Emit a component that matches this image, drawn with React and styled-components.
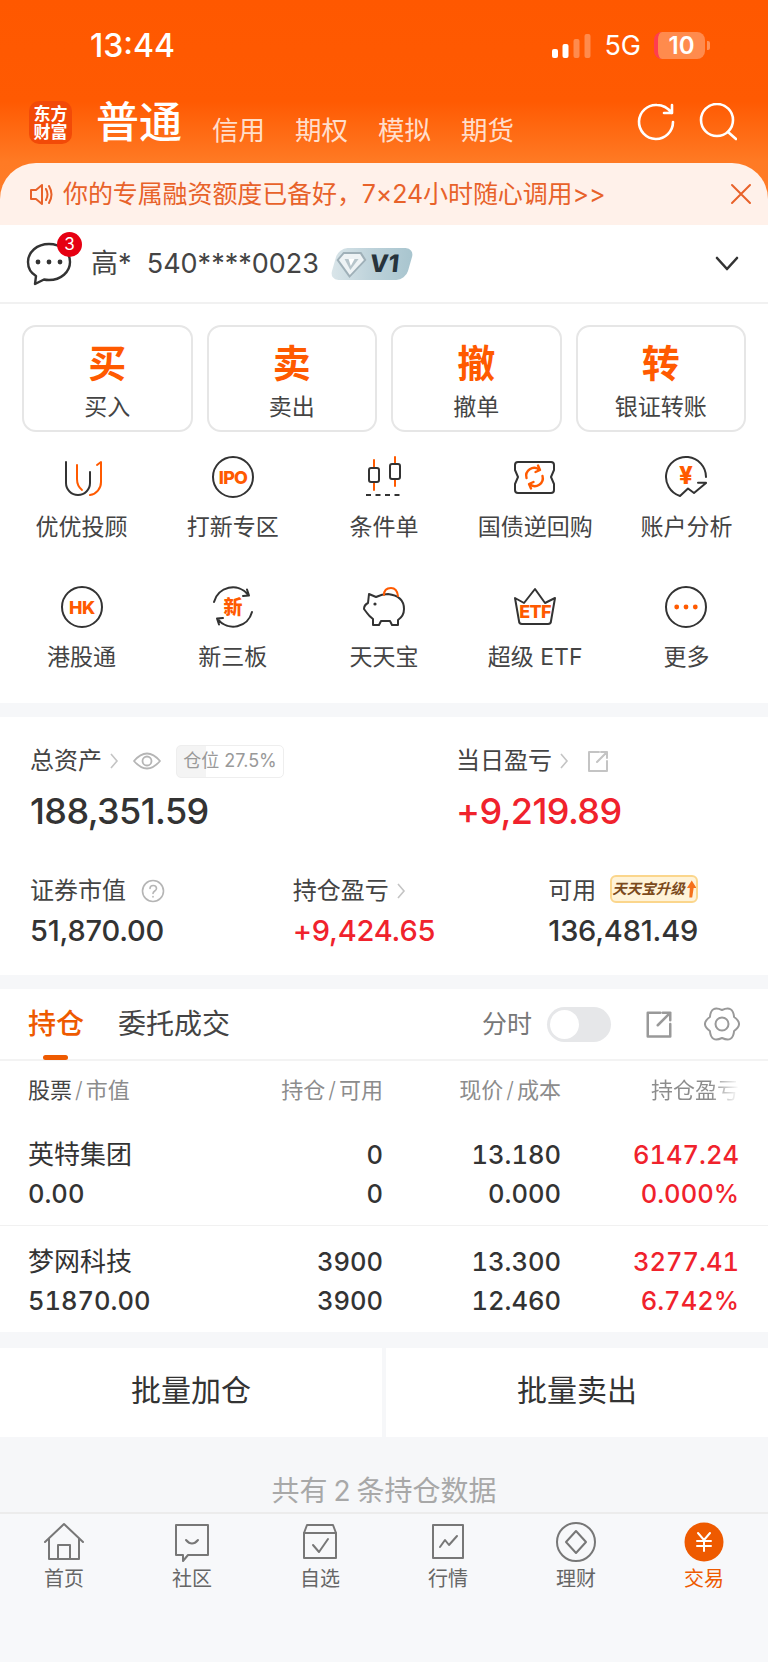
import React from 'react';
import styled, {createGlobalStyle} from 'styled-components';

const ORANGE = '#ff5a00';
const DARK = '#333';
const RED = '#f0222c';
const TEXT_FONT = 'Inter, "Noto Sans CJK SC", sans-serif';

const GlobalStyle = createGlobalStyle`
  html, body {
    margin: 0;
    padding: 0;
    background: #f6f7f9;
    font-family: ${TEXT_FONT};
  }
  * { box-sizing: border-box; }
`;

const Page = styled.div`
  width: 768px;
  height: 1662px;
  overflow: hidden;
  display: flex;
  flex-direction: column;
  background: #f6f7f9;
`;

/* header */
const Header = styled.header`
  height: 225px;
  display: flex;
  flex-direction: column;
  background: linear-gradient(180deg, #ff5800 0%, #ff5a02 45%, #ff7a24 72%, #ff7f2c 100%);
`;

const StatusBar = styled.div`
  height: 90px;
  padding: 1px 58px 0 90px;
  display: flex;
  align-items: center;
  color: #fff;
`;

const Clock = styled.div`
  font-size: 32px;
  font-weight: 500;
  line-height: 40px;
  margin-right: auto;
`;

const Network = styled.span`
  font-size: 27px;
  line-height: 32px;
  margin: 0 13px 0 13px;
`;

const Battery = styled.div`
  position: relative;
  width: 51px;
  height: 27px;
  border-radius: 8px;
  overflow: hidden;
  background: rgba(255, 255, 255, 0.3);
  border-left: 4px solid #ff3d4f;
  font-size: 24px;
  font-weight: 600;
  line-height: 27px;
  text-align: center;
`;

const BatteryCap = styled.i`
  width: 3px;
  height: 9px;
  margin-left: 2px;
  border-radius: 0 2px 2px 0;
  background: rgba(255, 255, 255, 0.35);
`;

const NavRow = styled.nav`
  height: 44px;
  margin: 10px 0 19px;
  padding: 0 31px 0 29px;
  display: flex;
  align-items: center;
  color: #fff;
`;

const Logo = styled.div`
  width: 43px;
  height: 43px;
  border-radius: 10px;
  background: #f24a08;
  font-size: 17px;
  font-weight: 700;
  line-height: 18px;
  text-align: center;
  padding-top: 4px;
`;

const NavTitle = styled.div`
  margin-left: 24px;
  width: 88px;
  font-size: 43px;
  font-weight: 500;
  line-height: 44px;
  white-space: nowrap;
`;

const NavTabs = styled.div`
  margin-left: 28px;
  padding-top: 15px;
  display: flex;
  gap: 30.5px;
  flex: 1;
`;

const NavTab = styled.span`
  width: 52.5px;
  font-size: 26.5px;
  line-height: 30px;
  white-space: nowrap;
  color: rgba(255, 255, 255, 0.8);
`;

const NavActions = styled.div`
  display: flex;
  gap: 24px;
`;

const Notice = styled.div`
  height: 62px;
  border-radius: 36px 36px 0 0;
  background: #fff1ea;
  padding: 0 16px 0 29px;
  display: flex;
  align-items: center;
  color: #e8622a;
`;

const NoticeText = styled.span`
  flex: 1;
  margin-left: 9px;
  font-size: 25px;
  letter-spacing: -0.1px;
  line-height: 36px;
  white-space: nowrap;
`;

/* account */
const AccountRow = styled.div`
  height: 79px;
  padding: 0 28px 0 26px;
  display: flex;
  align-items: center;
  background: #fff;
  border-bottom: 2px solid #f1f1f1;
`;

const ChatWrap = styled.div`
  position: relative;
  width: 46px;
  height: 46px;
  margin-right: 19px;
`;

const Badge = styled.b`
  position: absolute;
  top: -9px;
  left: 31px;
  width: 25px;
  height: 25px;
  border-radius: 50%;
  background: #e60012;
  color: #fff;
  font-size: 17px;
  font-weight: 400;
  line-height: 25px;
  text-align: center;
`;

const AccountText = styled.span`
  font-size: 27px;
  line-height: 36px;
  color: #444;
  white-space: pre;
`;

const Level = styled.div`
  width: 76px;
  height: 32px;
  margin: 0 auto 0 15px;
  padding-left: 1px;
  border-radius: 9px;
  transform: skewX(-16deg);
  background: linear-gradient(75deg, #dbe6ea 0%, #bdd2da 50%, #a7c4ce 100%);
  display: flex;
  align-items: center;
`;

const LevelInner = styled.div`
  transform: skewX(10deg);
  display: flex;
  align-items: center;
  gap: 3px;
  color: #26333c;
  font-size: 24px;
  font-weight: 800;
  line-height: 32px;
`;

/* actions */
const ActionPanel = styled.section`
  background: #fff;
  padding: 21px 0 31px;
`;

const TradeButtons = styled.div`
  padding: 0 22px;
  display: grid;
  grid-template-columns: repeat(4, 1fr);
  gap: 14px;
`;

const TradeButton = styled.div`
  height: 107px;
  border: 2px solid #e6e6e6;
  border-radius: 14px;
  display: flex;
  flex-direction: column;
  align-items: center;
`;

const TradeGlyph = styled.div`
  margin-top: 14px;
  font-size: 38px;
  font-weight: 700;
  line-height: 44px;
  color: ${ORANGE};
`;

const TradeLabel = styled.div`
  margin-top: 7px;
  font-size: 23px;
  line-height: 30px;
  color: #444;
  white-space: nowrap;
`;

const Shortcuts = styled.div`
  margin-top: 23px;
  padding: 0 6px;
  display: grid;
  grid-template-columns: repeat(5, 1fr);
  row-gap: 43px;
`;

const Shortcut = styled.div`
  height: 87px;
  display: flex;
  flex-direction: column;
  align-items: center;
`;

const ShortcutLabel = styled.div`
  margin-top: 13px;
  font-size: 23px;
  line-height: 30px;
  color: #444;
  white-space: nowrap;
`;

/* assets */
const AssetsCard = styled.section`
  margin-top: 14px;
  height: 258px;
  background: #fff;
  padding: 27px 0 0 30px;
`;

const AssetRow = styled.div`
  display: flex;
  margin-top: ${p => p.$top || 0}px;
`;

const AssetCol = styled.div`
  width: ${p => p.$width}px;
`;

const AssetLabel = styled.div`
  height: 34px;
  display: flex;
  align-items: center;
  font-size: 24px;
  line-height: 34px;
  color: #444;
`;

const Chevron = styled.svg`
  width: 10px;
  height: 20px;
  margin-left: 7px;
  fill: none;
  stroke: #c4c4c4;
  stroke-width: 1.6;
`;

const Value = styled.div`
  margin-top: ${p => (p.$big ? 11 : 5)}px;
  font-size: ${p => (p.$big ? 36 : 29)}px;
  letter-spacing: ${p => (p.$big ? -0.6 : -0.2)}px;
  line-height: ${p => (p.$big ? 44 : 36)}px;
  font-weight: 500;
  color: ${p => (p.$up ? RED : DARK)};
`;

const PositionPill = styled.div`
  width: 108px;
  height: 33px;
  margin-left: 15px;
  border: 1.5px solid #eee;
  border-radius: 5px;
  background: linear-gradient(90deg, #f4f4f4 27.5%, #fff 27.5%);
  font-size: 18px;
  line-height: 30px;
  color: #999;
  text-align: center;
  white-space: nowrap;
`;

const UpgradeTag = styled.div`
  width: 88px;
  height: 28px;
  margin: -4px 0 0 14px;
  border: 2px solid #fbd68c;
  border-radius: 6px;
  background: #fff3d8;
  display: flex;
  align-items: center;
  justify-content: center;
  gap: 1px;
  font-size: 14.5px;
  font-style: italic;
  font-weight: 700;
  line-height: 24px;
  color: #7b4a1c;
  white-space: nowrap;
`;

/* holdings */
const Holdings = styled.section`
  margin-top: 14px;
  background: #fff;
`;

const HoldingTabs = styled.div`
  position: relative;
  height: 72px;
  padding: 0 28px;
  display: flex;
  align-items: center;
  border-bottom: 2px solid #f3f3f3;
`;

const HoldingTab = styled.div`
  margin-right: ${p => (p.$active ? 34 : 0)}px;
  font-size: 28px;
  line-height: 40px;
  font-weight: ${p => (p.$active ? 500 : 400)};
  color: ${p => (p.$active ? '#ee5a00' : '#444')};
`;

const TabMark = styled.i`
  position: absolute;
  left: 43px;
  bottom: -1px;
  width: 25px;
  height: 5px;
  border-radius: 3px;
  background: #ee5a00;
`;

const HoldingTools = styled.div`
  margin-left: auto;
  display: flex;
  align-items: center;
  color: #777;
  font-size: 25px;
  line-height: 36px;
`;

const Toggle = styled.div`
  width: 64px;
  height: 35px;
  margin: 0 33px 0 15px;
  padding: 3px;
  border-radius: 18px;
  background: #e6e7e9;
`;

const ToggleKnob = styled.div`
  width: 29px;
  height: 29px;
  border-radius: 50%;
  background: #fff;
`;

const TableRow = styled.div`
  padding: ${p => (p.$head ? '0' : '16px 0 12px')};
  margin: 0 29px 0 0;
  padding-left: 28px;
  height: ${p => (p.$head ? '58px' : 'auto')};
  display: grid;
  grid-template-columns: 177px 178px 178px 178px;
  align-items: center;
`;

const RowLine = styled.div`
  border-top: 1px solid #f1f1f1;
`;

const HeadCell = styled.div`
  font-size: 22px;
  line-height: 30px;
  color: #8c8c8c;
  text-align: ${p => (p.$left ? 'left' : 'right')};
  white-space: nowrap;
`;

const HeadStrong = styled.span`
  color: #444;
`;

const Slash = styled.span`
  margin: 0 3px;
  font-weight: 300;
`;

const HeadFade = styled.span`
  background: linear-gradient(90deg, #8c8c8c 68%, #fff 100%);
  -webkit-background-clip: text;
  background-clip: text;
  color: transparent;
`;

const Cell = styled.div`
  font-size: ${p => (p.$name ? 26 : 25.5)}px;
  font-variant-numeric: tabular-nums;
  line-height: 39px;
  font-weight: ${p => (p.$name ? 400 : 500)};
  color: ${p => (p.$up ? RED : DARK)};
  text-align: ${p => (p.$left ? 'left' : 'right')};
  white-space: nowrap;
`;

/* batch buttons */
const BatchBar = styled.div`
  margin-top: 16px;
  height: 89px;
  display: flex;
  gap: 4px;
`;

const BatchButton = styled.div`
  flex: 1;
  background: #fff;
  font-size: 30px;
  line-height: 84px;
  color: #333;
  text-align: center;
`;

const Summary = styled.div`
  height: 75px;
  padding-top: 34px;
  font-size: 28px;
  word-spacing: -2px;
  line-height: 40px;
  color: #a8a8a8;
  text-align: center;
  white-space: pre;
`;

/* tab bar */
const TabBar = styled.footer`
  height: 150px;
  padding-top: 6px;
  background: #f7f8fa;
  border-top: 2px solid #ececec;
  display: grid;
  grid-template-columns: repeat(6, 1fr);
`;

const TabItem = styled.div`
  display: flex;
  flex-direction: column;
  align-items: center;
  gap: 1px;
  font-size: 20px;
  line-height: 28px;
  color: ${p => (p.$active ? '#ee5a00' : '#666')};
`;

/* icons */
const Icon = styled.svg`
  width: ${p => p.$size || 44}px;
  height: ${p => p.$size || 44}px;
  flex: none;
  fill: none;
  margin-left: ${p => p.$left || 0}px;
  stroke: ${p => p.$stroke || DARK};
  stroke-width: ${p => p.$weight || 2};
  stroke-linecap: round;
  stroke-linejoin: round;
`;

const Tiny = styled.text`
  fill: ${ORANGE};
  stroke: none;
  font-family: ${TEXT_FONT};
  font-weight: 800;
  font-size: ${p => p.$size}px;
  letter-spacing: ${p => p.$tight || 0}px;
  text-anchor: middle;
`;

const Orange = styled.g`
  stroke: ${ORANGE};
  fill: none;
`;

const shortcuts = [
  {
    label: '优优投顾',
    icon: (
      <>
        <path d="M6 7V28a12 12 0 0 0 24 0V17" />
        <Orange>
          <path d="M17 10V24q0 7 5 11" />
          <path d="M37 10L41 7V27a13 13 0 0 1-11 13" />
        </Orange>
      </>
    )
  },
  {
    label: '打新专区',
    icon: (
      <>
        <circle cx="22" cy="22" r="20" />
        <Tiny $size={18} $tight={-0.8} x="22" y="28.500">IPO</Tiny>
      </>
    )
  },
  {
    label: '条件单',
    icon: (
      <>
        <Orange>
          <path d="M12 5V13M12 27V35M33 2V9M33 24V31" />
        </Orange>
        <rect x="7" y="13" width="10" height="14" rx="2" />
        <rect x="28" y="9" width="10" height="15" rx="2" />
        <path d="M4 40H41" strokeDasharray="5 4.5" strokeLinecap="butt" />
      </>
    )
  },
  {
    label: '国债逆回购',
    icon: (
      <>
        <path d="M5 7H38Q41 7 41 10V15L38 22L41 29V35Q41 38 38 38H5Q2 38 2 35V29L5 22L2 15V10Q2 7 5 7Z" />
        <Orange strokeWidth="2.4">
          <path d="M13.500 23A8 8 0 0 1 26 14.500" />
          <path d="M29.500 21A8 8 0 0 1 17 29.500" />
          <path d="M25 10.500L27 15L22.500 17M18 33.500L16 29L20.500 27" />
        </Orange>
      </>
    )
  },
  {
    label: '账户分析',
    icon: (
      <>
        <path d="M42 22A20 20 0 1 0 16 41L24 33.500L30 38L42 28M34 27.700H42" />
        <Tiny $size={24} x="22" y="29">¥</Tiny>
      </>
    )
  },
  {
    label: '港股通',
    icon: (
      <>
        <circle cx="22" cy="22" r="20" />
        <Tiny $size={18} $tight={-0.5} x="22" y="28.500">HK</Tiny>
      </>
    )
  },
  {
    label: '新三板',
    icon: (
      <>
        <path d="M3 17A19.500 19.500 0 0 1 37 9.500M36 4.500L38 10.500L32 11" />
        <path d="M41 27A19.500 19.500 0 0 1 7 34.500M8 39.500L6 33.500L12 33" />
        <Tiny $size={19} x="22" y="29">新</Tiny>
      </>
    )
  },
  {
    label: '天天宝',
    icon: (
      <>
        <path d="M7 9L14 12Q20 9 26 9Q42 11 42 24Q42 31 36 35V40H30L28 36H19L17 40H11V34Q7 31 5 28L2 24Q2 20 6 18Z" />
        <circle cx="13" cy="19" r="1.600" fill={DARK} stroke="none" />
        <Orange>
          <path d="M22 10Q22 3 29 3Q35 3 36 11" />
        </Orange>
      </>
    )
  },
  {
    label: '超级 ETF',
    icon: (
      <>
        <path d="M2 13L11 18L22 4L32 18L42 13L38 36Q38 39 35 39H9Q6 39 6 36Z" />
        <Tiny $size={18} $tight={-0.8} x="22" y="33">ETF</Tiny>
      </>
    )
  },
  {
    label: '更多',
    icon: (
      <>
        <circle cx="22" cy="22" r="20" />
        <circle cx="12.700" cy="22" r="2.400" fill={ORANGE} stroke="none" />
        <circle cx="22" cy="22" r="2.400" fill={ORANGE} stroke="none" />
        <circle cx="31.300" cy="22" r="2.400" fill={ORANGE} stroke="none" />
      </>
    )
  }
];

const tabs = [
  {
    label: '首页',
    icon: <path d="M3 22L22 4L41 22M7 19V39H37V19M16 39V25H28V39" />
  },
  {
    label: '社区',
    icon: (
      <>
        <path d="M6 5H38V35H18L13 41V35H6Z" />
        <path d="M16 20Q22 27 28 20" />
      </>
    )
  },
  {
    label: '自选',
    icon: (
      <>
        <path d="M6 13L9 5H35L38 13V38H6Z" />
        <path d="M6 13H38" />
        <path d="M15 25L21 32L30 19" />
      </>
    )
  },
  {
    label: '行情',
    icon: (
      <>
        <path d="M7 5H37V38H7Z" />
        <path d="M14 27L19 20L23 25L31 16" />
      </>
    )
  },
  {
    label: '理财',
    icon: (
      <>
        <circle cx="22" cy="22" r="19" />
        <path d="M22 11L32 22L22 33L12 22Z" />
      </>
    )
  },
  {
    label: '交易',
    active: true,
    icon: (
      <>
        <circle cx="22" cy="22" r="19.500" fill="#ee5a00" stroke="none" />
        <path d="M16 13L22 20L28 13M15 21H29M15 26H29M22 21V31" stroke="#fff" />
      </>
    )
  }
];

const rows = [
  [['英特集团', '0.00'], ['0', '0'], ['13.180', '0.000'], ['6147.24', '0.000%']],
  [['梦网科技', '51870.00'], ['3900', '3900'], ['13.300', '12.460'], ['3277.41', '6.742%']]
];

const Arrow = () => (
  <Chevron viewBox="0 0 10 20">
    <path d="M2 3L8 10L2 17" />
  </Chevron>
);

const Share = ({size = 24, color = '#c4c4c4', left = 0}) => (
  <Icon $size={size} $stroke={color} $left={left} viewBox="0 0 24 24">
    <path d="M13 3H3V22H21V12M11 13L21 3M15 3H21V9" />
  </Icon>
);

const App = () => (
  <Page>
    <GlobalStyle />
    <Header>
      <StatusBar>
        <Clock>13:44</Clock>
        <svg width="39" height="24" viewBox="0 0 39 24">
          <rect x="0" y="15" width="6" height="9" rx="2" fill="#fff" />
          <rect x="10.500" y="10" width="6" height="14" rx="2" fill="#fff" />
          <rect x="21.500" y="5" width="6" height="19" rx="2" fill="#fff" opacity="0.3" />
          <rect x="32.500" y="0" width="6" height="24" rx="2" fill="#fff" opacity="0.3" />
        </svg>
        <Network>5G</Network>
        <Battery>10</Battery>
        <BatteryCap />
      </StatusBar>
      <NavRow>
        <Logo>东方<br />财富</Logo>
        <NavTitle>普通</NavTitle>
        <NavTabs>
          {['信用', '期权', '模拟', '期货'].map(name => <NavTab key={name}>{name}</NavTab>)}
        </NavTabs>
        <NavActions>
          <Icon $size={38} $stroke="#fff" $weight={2.6} viewBox="0 0 38 38">
            <path d="M36 19A17 17 0 1 1 20 2C26 2 31 5 35 10M35 2V10H27" />
          </Icon>
          <Icon $size={38} $stroke="#fff" $weight={2.6} viewBox="0 0 38 38">
            <circle cx="18" cy="17" r="16" />
            <path d="M29 29L37 36" />
          </Icon>
        </NavActions>
      </NavRow>
      <Notice>
        <Icon $size={25} $stroke="#e8622a" viewBox="0 0 25 25">
          <path d="M2 8H7L13 3V22L7 17H2Z" />
          <path d="M17 7Q20 12.500 17 18M20 4Q25 12.500 20 21" />
        </Icon>
        <NoticeText>你的专属融资额度已备好，7×24小时随心调用&gt;&gt;</NoticeText>
        <Icon $size={22} $stroke="#e8622a" viewBox="0 0 22 22">
          <path d="M2 2L20 20M20 2L2 20" />
        </Icon>
      </Notice>
    </Header>

    <AccountRow>
      <ChatWrap>
        <Icon $size={46} $weight={2.4} viewBox="0 0 46 46">
          <path d="M23 3C11 3 2 11 2 21C2 27 5 32 10 35L9 43L18 38.500C20 39 21 39 23 39C35 39 44 31 44 21C44 11 35 3 23 3Z" />
          <circle cx="12" cy="21" r="2.400" fill={DARK} stroke="none" />
          <circle cx="23" cy="21" r="2.400" fill={DARK} stroke="none" />
          <circle cx="34" cy="21" r="2.400" fill={DARK} stroke="none" />
        </Icon>
        <Badge>3</Badge>
      </ChatWrap>
      <AccountText>{'高*  540****0023'}</AccountText>
      <Level>
        <LevelInner>
          <svg width="32" height="30" viewBox="0 0 32 30">
            <path d="M7 3H25L31 11L16 29L1 11Z" fill="#9fb0b8" />
            <path d="M8 5H24L28.500 11L16 26L3.500 11Z" fill="#eef3f5" />
            <path d="M9 10H23L16 21Z" fill="#b7c5cb" />
            <path d="M13 10H19L16 17Z" fill="#fff" />
          </svg>
          V1
        </LevelInner>
      </Level>
      <Icon $size={26} $weight={2.6} viewBox="0 0 26 26">
        <path d="M3 7L13 18L23 7" />
      </Icon>
    </AccountRow>

    <ActionPanel>
      <TradeButtons>
        {[['买', '买入'], ['卖', '卖出'], ['撤', '撤单'], ['转', '银证转账']].map(([glyph, label]) => (
          <TradeButton key={label}>
            <TradeGlyph>{glyph}</TradeGlyph>
            <TradeLabel>{label}</TradeLabel>
          </TradeButton>
        ))}
      </TradeButtons>
      <Shortcuts>
        {shortcuts.map(item => (
          <Shortcut key={item.label}>
            <Icon viewBox="0 0 44 44">{item.icon}</Icon>
            <ShortcutLabel>{item.label}</ShortcutLabel>
          </Shortcut>
        ))}
      </Shortcuts>
    </ActionPanel>

    <AssetsCard>
      <AssetRow>
        <AssetCol $width={426}>
          <AssetLabel>
            总资产
            <Arrow />
            <Icon $size={28} $stroke="#b5b5b5" $weight={1.8} $left={14} viewBox="0 0 28 28">
              <path d="M1 14Q14 -1 27 14Q14 29 1 14Z" />
              <circle cx="14" cy="14" r="4.500" />
            </Icon>
            <PositionPill>仓位 27.5%</PositionPill>
          </AssetLabel>
          <Value $big>188,351.59</Value>
        </AssetCol>
        <AssetCol $width={300}>
          <AssetLabel>
            当日盈亏
            <Arrow />
            <Share left={17} />
          </AssetLabel>
          <Value $big $up>+9,219.89</Value>
        </AssetCol>
      </AssetRow>
      <AssetRow $top={41}>
        <AssetCol $width={263}>
          <AssetLabel>
            证券市值
            <Icon $size={24} $stroke="#b5b5b5" $weight={1.6} $left={15} viewBox="0 0 24 24">
              <circle cx="12" cy="12" r="10.500" />
              <path d="M9 9.500C9 5.500 15.500 5.500 15.500 9.500C15.500 12 12 12 12 14.500M12 17.500V18" />
            </Icon>
          </AssetLabel>
          <Value>51,870.00</Value>
        </AssetCol>
        <AssetCol $width={256}>
          <AssetLabel>持仓盈亏<Arrow /></AssetLabel>
          <Value $up>+9,424.65</Value>
        </AssetCol>
        <AssetCol $width={220}>
          <AssetLabel>
            可用
            <UpgradeTag>
              天天宝升级
              <svg width="11" height="18" viewBox="0 0 11 18">
                <path d="M6 0L11 8H8L6.500 18H3.500L4 8H1Z" fill="#f5711b" />
              </svg>
            </UpgradeTag>
          </AssetLabel>
          <Value>136,481.49</Value>
        </AssetCol>
      </AssetRow>
    </AssetsCard>

    <Holdings>
      <HoldingTabs>
        <HoldingTab $active>持仓</HoldingTab>
        <HoldingTab>委托成交</HoldingTab>
        <TabMark />
        <HoldingTools>
          分时
          <Toggle><ToggleKnob /></Toggle>
          <Share size={30} color="#999" />
          <Icon $size={36} $stroke="#999" $left={30} viewBox="0 0 36 36">
            <path d="M18 4Q29 -1 30.100 11Q40 18 30.100 25Q29 37 18 32Q7 37 5.900 25Q-4 18 5.900 11Q7 -1 18 4Z" />
            <circle cx="18" cy="18" r="6.500" />
          </Icon>
        </HoldingTools>
      </HoldingTabs>
      <TableRow $head>
        <HeadCell $left><HeadStrong>股票</HeadStrong><Slash>/</Slash>市值</HeadCell>
        <HeadCell>持仓<Slash>/</Slash>可用</HeadCell>
        <HeadCell>现价<Slash>/</Slash>成本</HeadCell>
        <HeadCell><HeadFade>持仓盈亏</HeadFade></HeadCell>
      </TableRow>
      {rows.map((row, index) => (
        <React.Fragment key={row[0][0]}>
          {index > 0 && <RowLine />}
          <TableRow>
            <div>
              <Cell $left $name>{row[0][0]}</Cell>
              <Cell $left>{row[0][1]}</Cell>
            </div>
            <div>
              <Cell>{row[1][0]}</Cell>
              <Cell>{row[1][1]}</Cell>
            </div>
            <div>
              <Cell>{row[2][0]}</Cell>
              <Cell>{row[2][1]}</Cell>
            </div>
            <div>
              <Cell $up>{row[3][0]}</Cell>
              <Cell $up>{row[3][1]}</Cell>
            </div>
          </TableRow>
        </React.Fragment>
      ))}
    </Holdings>

    <BatchBar>
      <BatchButton>批量加仓</BatchButton>
      <BatchButton>批量卖出</BatchButton>
    </BatchBar>
    <Summary>共有 2 条持仓数据</Summary>

    <TabBar>
      {tabs.map(tab => (
        <TabItem key={tab.label} $active={tab.active}>
          <Icon $stroke="#777" viewBox="0 0 44 44">{tab.icon}</Icon>
          {tab.label}
        </TabItem>
      ))}
    </TabBar>
  </Page>
);

export default App;
